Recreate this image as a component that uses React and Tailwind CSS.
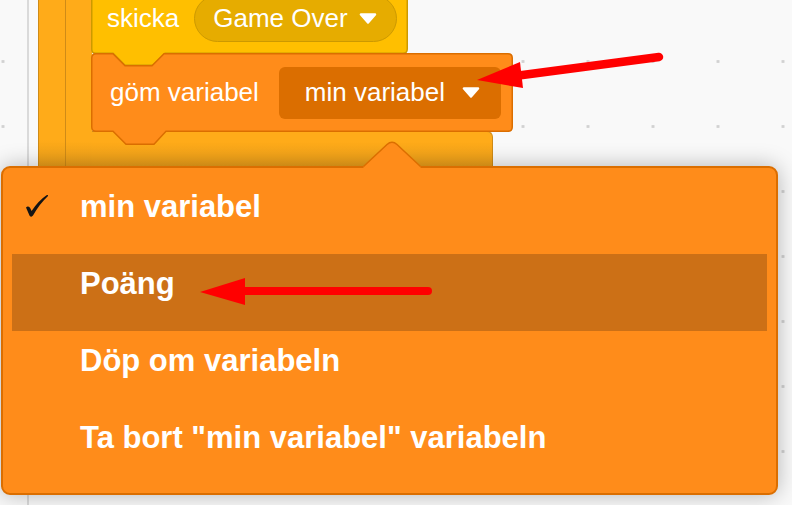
import React from 'react';

const Caret = ({ className = '' }) => (
  <svg width="18" height="11" viewBox="0 0 18 11" className={className}>
    <polygon points="2,1.5 16,1.5 9,9.5" fill="#fff" stroke="#fff" strokeWidth="2.5" strokeLinejoin="round" />
  </svg>
);

const Check = () => (
  <svg width="26" height="26" viewBox="0 0 26 26" className="ml-[13px] translate-y-[3px]">
    <path
      d="M1,13.5 Q3,11.5 5,13.8 L6.6,17 Q13,7 21.5,1.2 Q23.4,0.4 23,2 Q14,10.5 8,21.6 Q6.3,23.8 4.6,21.8 Z"
      fill="#141414"
    />
  </svg>
);

const menuItems = [
  { label: 'min variabel', checked: true },
  { label: 'Poäng', active: true },
  { label: 'Döp om variabeln' },
  { label: 'Ta bort "min variabel" variabeln' },
];

export default function App() {
  return (
    <div className="relative h-[505px] w-[792px] overflow-hidden bg-[#f9f9f9] bg-[radial-gradient(circle,#d2d2d2_1.3px,transparent_1.9px)] bg-[length:65px_65px] bg-[position:-29.5px_29px] font-['Liberation_Sans',Arial,sans-serif]">
      {/* palette edge */}
      <div className="absolute left-[27px] top-0 h-full w-[2px] bg-[#dadada]" />

      {/* control C-blocks */}
      <div className="absolute left-[38px] top-0 h-[200px] w-[28px] border-l border-[#CF8B17] bg-[linear-gradient(to_bottom,#FFAB19_140px,#E89D1B_170px)]" />
      <div className="absolute left-[91px] top-[131px] h-[70px] w-[402px] rounded-tr-[6px] border-r border-t border-[#CF8B17] bg-[linear-gradient(to_bottom,#FFAB19_10px,#E89D1B_39px)]" />
      <div className="absolute left-[65px] top-0 h-[200px] w-[27px] border-l border-[#CF8B17] bg-[linear-gradient(to_bottom,#FFAB19_141px,#E89D1B_170px)]" />

      {/* skicka block */}
      <svg className="absolute left-[91px] top-[-16px]" width="318" height="84" viewBox="0 0 318 84">
        <path
          d="M0.75,0 L316.25,0 L316.25,65 Q316.25,69.25 312,69.25 L74,69.25 L62,81.25 L34,81.25 L22,69.25 L4.5,69.25 Q0.75,69.25 0.75,65 Z"
          fill="#FFBF00"
          stroke="#CC9900"
          strokeWidth="1.5"
        />
      </svg>
      <div className="absolute left-[91px] top-[-16px] flex h-[69px] w-[317px] items-center pl-[16px] text-[26px] text-white">
        <span>skicka</span>
        <div className="ml-[15px] flex h-[47px] w-[203px] items-center rounded-full border border-[#CC9900] bg-[#E6AC00] pl-[18px]">
          <span>Game Over</span>
          <Caret className="ml-[11px]" />
        </div>
      </div>

      {/* göm variabel block */}
      <svg className="absolute left-[91px] top-[53px]" width="423" height="94" viewBox="0 0 423 94">
        <path
          d="M0.75,5 Q0.75,0.75 5,0.75 L22,0.75 L34,12.75 L61,12.75 L73,0.75 L417,0.75 Q421.25,0.75 421.25,5 L421.25,74 Q421.25,78.25 417,78.25 L75,78.25 L63,91.25 L35,91.25 L22,78.25 L5,78.25 Q0.75,78.25 0.75,74 Z"
          fill="#FF8C1A"
          stroke="#DB6E00"
          strokeWidth="1.5"
        />
      </svg>
      <div className="absolute left-[91px] top-[53px] flex h-[79px] w-[422px] items-center pl-[19px] text-[26px] text-white">
        <span>göm variabel</span>
        <div className="ml-[20px] flex h-[52px] w-[222px] items-center rounded-[6px] bg-[#DB6E00] pl-[26px] pr-[21px]">
          <span>min variabel</span>
          <Caret className="ml-auto" />
        </div>
      </div>

      {/* dropdown menu */}
      <div className="absolute left-[1px] top-[166px] h-[329px] w-[777px] rounded-[9px] border-2 border-[#DB6E00] bg-[#FF8C1A] px-[9px] pt-[9px] shadow-[0_0_22px_rgba(0,0,0,0.28)]">
        {menuItems.map((item) => (
          <div
            key={item.label}
            className={`flex h-[77px] items-start pt-[14px] text-[31px] font-bold leading-none text-white ${item.active ? 'bg-[#CC7016]' : ''}`}
          >
            <span className="flex w-[68px]">{item.checked && <Check />}</span>
            <span>{item.label}</span>
          </div>
        ))}
      </div>
      <svg className="absolute left-[363px] top-[141px]" width="58" height="29" viewBox="0 0 58 29">
        <path d="M0.5,25.5 L24,3.5 Q29,-1 34,3.5 L57.5,25.5 L57.5,29 L0.5,29 Z" fill="#FF8C1A" />
        <path d="M0.5,25.5 L24,3.5 Q29,-1 34,3.5 L57.5,25.5" fill="none" stroke="#DB6E00" strokeWidth="1.5" />
      </svg>

      {/* annotation arrows */}
      <svg className="pointer-events-none absolute left-0 top-0" width="792" height="505" viewBox="0 0 792 505">
        <line x1="659" y1="57" x2="515" y2="76" stroke="#FF0000" strokeWidth="8.5" strokeLinecap="round" />
        <polygon points="477,80 520,62 523,88" fill="#FF0000" />
        <line x1="240" y1="291" x2="428" y2="291" stroke="#FF0000" strokeWidth="8" strokeLinecap="round" />
        <polygon points="200,292 245,278 245,305" fill="#FF0000" />
      </svg>
    </div>
  );
}
